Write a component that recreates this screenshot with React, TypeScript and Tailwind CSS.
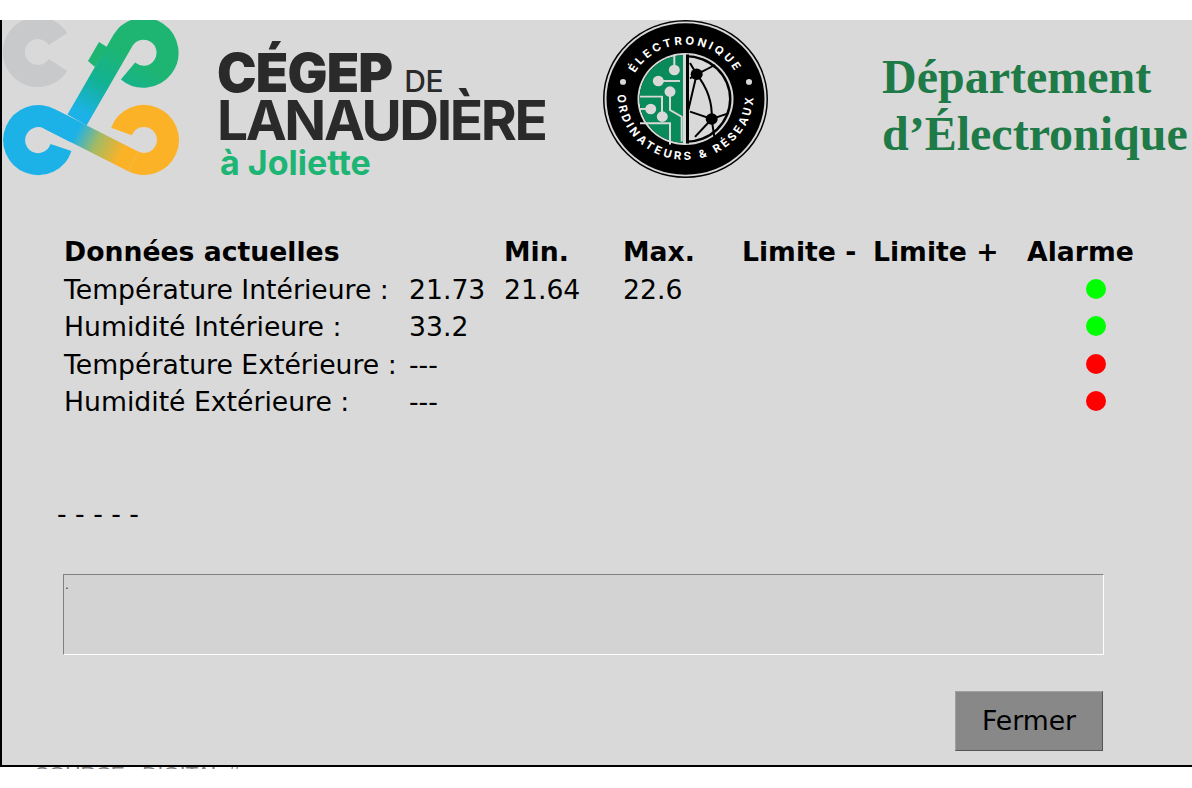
const rows = [
  { label: "Température Intérieure :", value: "21.73", min: "21.64", max: "22.6", ok: true },
  { label: "Humidité Intérieure :", value: "33.2", min: "", max: "", ok: true },
  { label: "Température Extérieure :", value: "---", min: "", max: "", ok: false },
  { label: "Humidité Extérieure :", value: "---", min: "", max: "", ok: false },
];

function CegepMark() {
  return (
    <svg width="184" height="160" viewBox="0 20 184 160" className="shrink-0" fill="none">
      <defs>
        <linearGradient id="stem" gradientUnits="userSpaceOnUse" x1="77" y1="120" x2="118" y2="50">
          <stop offset="0.1" stopColor="#1cb2e8" />
          <stop offset="0.55" stopColor="#12b294" />
          <stop offset="1" stopColor="#1eb573" />
        </linearGradient>
        <linearGradient id="bar" gradientUnits="userSpaceOnUse" x1="70" y1="130" x2="130" y2="160">
          <stop offset="0.1" stopColor="#1cb2e8" />
          <stop offset="0.45" stopColor="#a5ba62" />
          <stop offset="0.85" stopColor="#fcb227" />
        </linearGradient>
      </defs>
      <path d="M58 39A24 24 0 1 0 58 65" stroke="#c8c9cb" strokeWidth="22" />
      <path d="M48.8 118.6L133.2 161.4" stroke="url(#bar)" strokeWidth="22" />
      <path d="M121.5 131.5A24 24 0 1 1 133.2 161.4" stroke="#fcb227" strokeWidth="22" />
      <path d="M61 147.5A24 24 0 1 1 48.8 118.6L75 131.9" stroke="#1cb2e8" strokeWidth="22" />
      <path d="M77 120L123.2 40A24 24 0 1 1 128 71" stroke="url(#stem)" strokeWidth="22" />
      <path d="M99 42L107 47L95 67L88 61Z" fill="#1eb573" />
    </svg>
  );
}

function Badge() {
  return (
    <svg width="165" height="158" viewBox="0 0 165 165" preserveAspectRatio="none" className="shrink-0">
      <defs>
        <path id="topArc" d="M25 83A57.5 57.5 0 0 1 140 83" />
        <path id="botArc" d="M14.5 78A68 68 0 1 0 150.5 78" />
        <clipPath id="leftHalf">
          <rect x="30" y="30" width="50" height="106" />
        </clipPath>
      </defs>
      <circle cx="82.5" cy="82.5" r="82.5" fill="#000" />
      <circle cx="82.5" cy="82.5" r="81" fill="#d9d9d9" />
      <circle cx="82.5" cy="82.5" r="79" fill="#000" />
      <circle cx="82.5" cy="82.5" r="48" fill="#d9d9d9" />
      <circle cx="82.5" cy="82.5" r="46" fill="#000" />
      <circle cx="82.5" cy="82.5" r="43.5" fill="#d9d9d9" />
      <circle cx="82.5" cy="82.5" r="46" fill="#088a5b" clipPath="url(#leftHalf)" />
      <rect x="80" y="35" width="3" height="95" fill="#d9d9d9" />
      <rect x="83" y="36" width="3" height="93" fill="#000" />
      <g stroke="#d9d9d9" strokeWidth="2" fill="none">
        <path d="M71.3 36V52" />
        <path d="M55.3 63.7H77" />
        <path d="M37 80H59V101" />
        <path d="M37 92.9H47" />
        <path d="M37 107.9H67V130" />
        <path d="M67 75V94L78.7 101V127" />
      </g>
      <g fill="#d9d9d9">
        <circle cx="71.3" cy="52.2" r="5.5" />
        <circle cx="55.3" cy="63.7" r="5.5" />
        <circle cx="67" cy="74.8" r="5.5" />
        <circle cx="47.7" cy="92.9" r="5.5" />
        <circle cx="59.3" cy="100.9" r="5.5" />
      </g>
      <g stroke="#000" strokeWidth="2" fill="none">
        <path d="M87 45L93.7 56.7L87 61" />
        <path d="M93.7 56.7L112 47" />
        <path d="M93.7 56.7Q110 78 108.7 103.4" />
        <path d="M93.7 56.7L85.3 94" />
        <path d="M87 95.7L108.7 103.4L125.3 97.5" />
        <path d="M108.7 103.4L112 127" />
        <path d="M108.7 103.4L92 122" />
      </g>
      <circle cx="93.7" cy="56.7" r="6" fill="#000" />
      <circle cx="108.7" cy="103.4" r="6" fill="#000" />
      <circle cx="20" cy="64.7" r="3" fill="#d9d9d9" />
      <circle cx="146" cy="64.7" r="3" fill="#d9d9d9" />
      <text fill="#fff" fontSize="11.5" fontWeight="700" letterSpacing="2.8" style={{ fontFamily: "Inter, sans-serif" }}>
        <textPath href="#topArc" startOffset="50%" textAnchor="middle">ÉLECTRONIQUE</textPath>
      </text>
      <text fill="#fff" fontSize="11.5" fontWeight="700" letterSpacing="3" style={{ fontFamily: "Inter, sans-serif" }}>
        <textPath href="#botArc" startOffset="50%" textAnchor="middle">ORDINATEURS &amp; RÉSEAUX</textPath>
      </text>
    </svg>
  );
}

export default function App() {
  return (
    <div className="h-[788px] w-[1192px] overflow-hidden bg-white pt-5 font-['DejaVu_Sans',sans-serif] text-black">
      <div className="flex h-[747px] flex-col border-b-2 border-l-2 border-black bg-[#d9d9d9] pl-[62px]">
        <div className="-ml-[64px] flex h-[160px] items-start">
          <CegepMark />
          <div className="ml-[33px] w-[350px] shrink-0 font-['Inter',sans-serif] text-[#2a2a2a]">
            <div className="mt-[27px] flex h-[53px] items-baseline leading-none">
              <span className="text-[53px] font-black tracking-[-0.8px]">CÉGEP</span>
              <span className="ml-[12px] text-[30px] font-medium tracking-[-0.5px]">DE</span>
            </div>
            <div className="-mt-[3px] h-[46px] text-[55px] leading-[46px] font-bold tracking-[-2.4px]">LANAUDIÈRE</div>
            <div className="ml-[3px] mt-[3px] text-[34px] leading-[34px] font-bold text-[#1cb574]">à Joliette</div>
          </div>
          <div className="ml-[36px] shrink-0">
            <Badge />
          </div>
          <div className="ml-[114px] mt-[28px] shrink-0 font-['Liberation_Serif',serif] text-[48px] leading-[57px] font-bold whitespace-nowrap text-[#1e7a46]">
            <div>Département</div>
            <div>d’Électronique</div>
          </div>
        </div>

        <div className="mt-[53px] grid grid-cols-[345px_95px_119px_119px_131px_154px_120px] text-[26.67px] leading-[37.5px] whitespace-nowrap">
          <div className="font-bold">Données actuelles</div>
          <div />
          <div className="font-bold">Min.</div>
          <div className="font-bold">Max.</div>
          <div className="font-bold">Limite -</div>
          <div className="font-bold">Limite +</div>
          <div className="font-bold">Alarme</div>
          {rows.map((row) => (
            <div key={row.label} className="col-span-7 grid grid-cols-subgrid">
              <div>{row.label}</div>
              <div>{row.value}</div>
              <div>{row.min}</div>
              <div>{row.max}</div>
              <div />
              <div />
              <div className="flex items-center pb-[1px] pl-[59px]">
                <span className={`size-5 rounded-full ${row.ok ? "bg-[#00ff00]" : "bg-[#ff0000]"}`} />
              </div>
            </div>
          ))}
        </div>

        <div className="-ml-[7px] mt-[74px] text-[26.67px] leading-[37px]">- - - - -</div>

        <div className="-ml-[1px] mt-[42px] h-[81px] w-[1041px] border border-t-[#808080] border-r-white border-b-white border-l-[#808080] bg-[#d3d3d3] pl-[1px] text-[12px] leading-[20px] text-[#3a4a20]">
          .
        </div>

        <div className="mt-[36px] ml-[891px] flex h-[60px] w-[148px] items-center justify-center border border-t-[#a0a0a0] border-r-[#555555] border-b-[#555555] border-l-[#a0a0a0] bg-[#888888] text-[26.67px]">
          Fermer
        </div>
      </div>
      <div className="h-[2px] overflow-hidden pl-[35px] font-['Liberation_Sans',sans-serif] text-[21px] leading-[2px] text-[#808080]">
        <span className="relative top-[6px]">SOURCE : DIGITAL #</span>
      </div>
    </div>
  );
}
